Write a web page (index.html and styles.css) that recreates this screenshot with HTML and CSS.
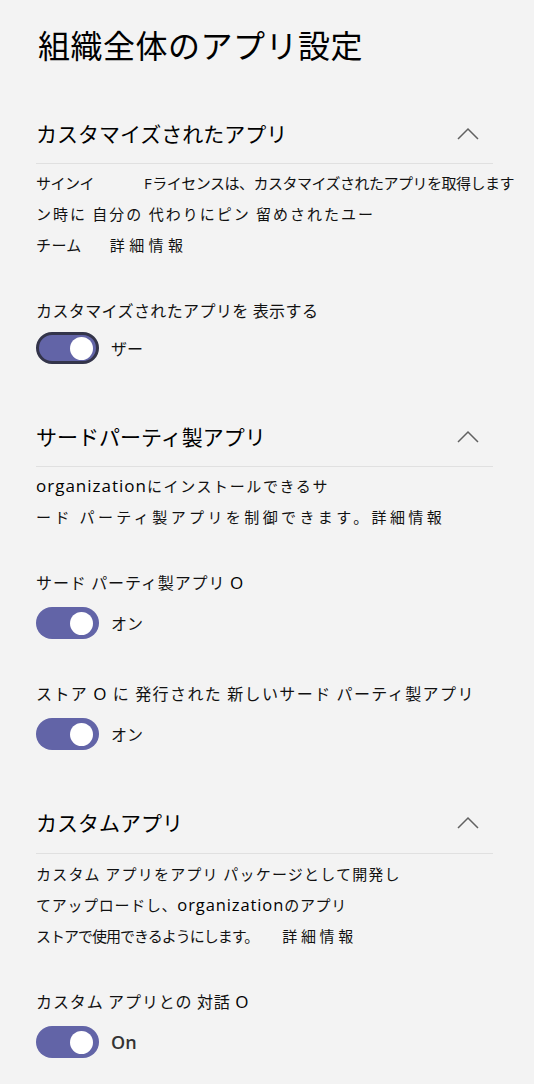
FILE: index.html
```html
<!DOCTYPE html>
<html lang="ja">
<head>
<meta charset="utf-8">
<title>組織全体のアプリ設定</title>
<link rel="stylesheet" href="styles.css">
</head>
<body>
<main class="page">
  <h1 class="title">組織全体のアプリ設定</h1>

  <section class="section">
    <div class="section-head">
      <h2 class="section-title">カスタマイズされたアプリ</h2>
      <svg class="chevron" width="22" height="13" viewBox="0 0 22 13"><path d="M1 12 L11 2 L21 12" fill="none" stroke="#616161" stroke-width="1.5"/></svg>
    </div>
    <div class="desc">
      <div class="line ls-tight">サインイ<span class="gap-l"></span><span class="latin-f">F</span>ライセンスは、カスタマイズされたアプリを取得します</div>
      <div class="line ls-wide">ン時に 自分の 代わりにピン 留めされたユー</div>
      <div class="line">チーム<span class="gap-m"></span><span class="more">詳細情報</span></div>
    </div>
    <div class="setting">
      <div class="label">カスタマイズされたアプリを 表示する</div>
      <div class="toggle-row toggle-row-close">
        <span class="toggle toggle-focus"><span class="knob"></span></span>
        <span class="state">ザー</span>
      </div>
    </div>
  </section>

  <section class="section">
    <div class="section-head">
      <h2 class="section-title">サードパーティ製アプリ</h2>
      <svg class="chevron" width="22" height="13" viewBox="0 0 22 13"><path d="M1 12 L11 2 L21 12" fill="none" stroke="#616161" stroke-width="1.5"/></svg>
    </div>
    <div class="desc">
      <div class="line ls-open"><span class="latin">organization</span>にインストールできるサ</div>
      <div class="line ls-wider">ード パーティ製アプリを制御できます。詳細情報</div>
    </div>
    <div class="setting">
      <div class="label label-wide">サード パーティ製アプリ <span class="latin-o">O</span></div>
      <div class="toggle-row">
        <span class="toggle"><span class="knob"></span></span>
        <span class="state">オン</span>
      </div>
    </div>
    <div class="setting setting-next">
      <div class="label label-wider">ストア <span class="latin-o">O</span> に 発行された 新しいサード パーティ製アプリ</div>
      <div class="toggle-row">
        <span class="toggle"><span class="knob"></span></span>
        <span class="state">オン</span>
      </div>
    </div>
  </section>

  <section class="section section-last">
    <div class="section-head">
      <h2 class="section-title">カスタムアプリ</h2>
      <svg class="chevron" width="22" height="13" viewBox="0 0 22 13"><path d="M1 12 L11 2 L21 12" fill="none" stroke="#616161" stroke-width="1.5"/></svg>
    </div>
    <div class="desc">
      <div class="line ls-mid">カスタム アプリをアプリ パッケージとして開発し</div>
      <div class="line ls-soft">てアップロードし、<span class="latin latin-sm">organization</span>のアプリ</div>
      <div class="line"><span class="ls-narrow">ストアで使用できるようにします。</span><span class="gap-s"></span><span class="more more-sm">詳細情報</span></div>
    </div>
    <div class="setting">
      <div class="label label-wide">カスタム アプリとの 対話 <span class="latin-o">O</span></div>
      <div class="toggle-row">
        <span class="toggle"><span class="knob"></span></span>
        <span class="state state-en">On</span>
      </div>
    </div>
  </section>
</main>
</body>
</html>
```

FILE: styles.css
```css
html, body {
  margin: 0;
  padding: 0;
  background: #f3f3f3;
}

body {
  font-family: "Noto Sans CJK JP", "Noto Sans", sans-serif;
  color: #111;
}

.page {
  width: 457px;
  padding: 24px 0 0 36px;
}

.title {
  margin: 0 0 0 2px;
  font-size: 32px;
  line-height: 40px;
  font-weight: 400;
  letter-spacing: 0.5px;
  color: #000;
}

.section {
  margin-top: 54px;
}

.section + .section {
  margin-top: 57px;
}

.section-head {
  display: flex;
  justify-content: space-between;
  align-items: center;
  padding: 0 14px 15px 0;
  border-bottom: 1px solid #e0e0e0;
}

.section-last .section-head {
  padding-bottom: 16px;
}

.section-last .desc {
  margin-top: 4px;
}

.section-title {
  margin: 0;
  font-size: 21px;
  line-height: 30px;
  font-weight: 400;
  color: #000;
}

.chevron {
  display: block;
}

.desc {
  margin-top: 3px;
  font-size: 15px;
  line-height: 31px;
  letter-spacing: 0.4px;
  white-space: nowrap;
}

.line {
  height: 31px;
}

.ls-tight { letter-spacing: -0.5px; }
.ls-wide { letter-spacing: 2px; }
.ls-narrow { letter-spacing: -1px; }
.ls-open { letter-spacing: 1.6px; }
.ls-wider { letter-spacing: 3.4px; }
.ls-mid { letter-spacing: 1.2px; }
.ls-soft { letter-spacing: 0.7px; }

.more {
  letter-spacing: 4.4px;
}

.more-sm {
  letter-spacing: 3.7px;
}

.latin {
  font-family: "Open Sans", "Noto Sans", sans-serif;
  font-size: 17px;
  letter-spacing: 1px;
  color: #000;
}

.latin-sm {
  font-size: 16.5px;
  letter-spacing: 0.9px;
}

.latin-f {
  font-family: "Open Sans", sans-serif;
  margin-right: 1px;
}

.latin-o {
  font-family: "Open Sans", "Noto Sans", sans-serif;
  font-size: 17px;
  color: #000;
}

.gap-l {
  display: inline-block;
  width: 50px;
}

.gap-m {
  display: inline-block;
  width: 28px;
}

.gap-s {
  display: inline-block;
  width: 24px;
}

.setting {
  margin-top: 38px;
}

.setting-next {
  margin-top: 42px;
}

.label {
  font-size: 16px;
  line-height: 24px;
  letter-spacing: 0.4px;
  white-space: nowrap;
}

.label-wide {
  letter-spacing: 0.9px;
}

.label-wider {
  letter-spacing: 1.4px;
}

.toggle-row {
  display: flex;
  align-items: center;
  gap: 12px;
  margin-top: 12px;
}

.toggle-row-close {
  margin-top: 10px;
}

.toggle {
  box-sizing: border-box;
  width: 63px;
  height: 32px;
  border-radius: 16px;
  background: #6264a7;
  display: flex;
  align-items: center;
  justify-content: flex-end;
  padding-right: 6px;
}

.toggle-focus {
  border: 3px solid #33344a;
  padding-right: 3px;
}

.knob {
  width: 23px;
  height: 23px;
  border-radius: 50%;
  background: #fff;
}

.state {
  font-size: 16px;
  line-height: 24px;
}

.state-en {
  font-family: "Open Sans", "Noto Sans", sans-serif;
  font-weight: 600;
  font-size: 18px;
  color: #333;
}
```
